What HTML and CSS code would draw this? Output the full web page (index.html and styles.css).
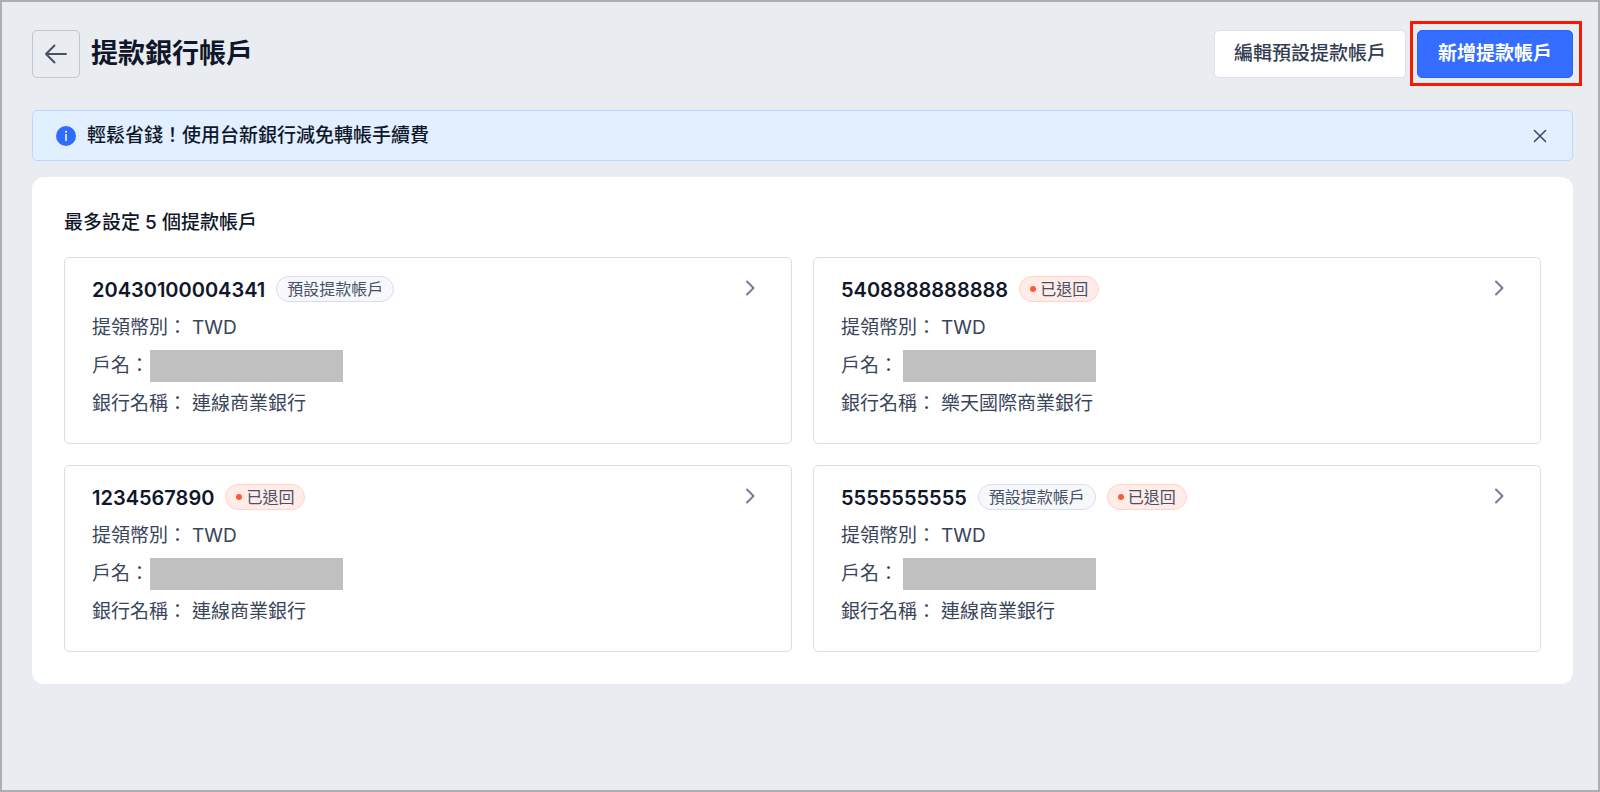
FILE: index.html
```html
<!DOCTYPE html>
<html lang="zh-Hant">
<head>
<meta charset="utf-8">
<meta name="viewport" content="width=device-width, initial-scale=1">
<title>提款銀行帳戶</title>
<link rel="stylesheet" href="styles.css">
</head>
<body>
<div class="page">
  <header class="page-header">
    <button class="back-button" type="button" aria-label="返回">
      <svg width="24" height="24" viewBox="0 0 24 24" fill="none" stroke="currentColor" stroke-width="2" stroke-linecap="round" stroke-linejoin="round" aria-hidden="true"><path d="M22 12H2M10.500 3.500L2 12l8.500 8.500"/></svg>
    </button>
    <h1 class="page-title">提款銀行帳戶</h1>
    <div class="actions">
      <button class="button" type="button">編輯預設提款帳戶</button>
      <div class="highlight">
        <button class="button button-primary" type="button">新增提款帳戶</button>
      </div>
    </div>
  </header>

  <main>
    <div class="banner" role="status">
      <svg class="banner-icon" width="20" height="20" viewBox="0 0 20 20" aria-hidden="true"><circle cx="10" cy="10" r="10" fill="#306bff"/><circle cx="10" cy="5.800" r="1" fill="#fff"/><path d="M10 8.500v6" stroke="#fff" stroke-width="1.500" stroke-linecap="round"/></svg>
      <p class="banner-text">輕鬆省錢！使用台新銀行減免轉帳手續費</p>
      <button class="banner-close" type="button" aria-label="關閉">
        <svg width="20" height="20" viewBox="0 0 20 20" fill="none" stroke="currentColor" stroke-width="1.500" stroke-linecap="round" aria-hidden="true"><path d="M4.500 4.500l11 11M15.500 4.500l-11 11"/></svg>
      </button>
    </div>

    <section class="panel">
      <h2 class="panel-title">最多設定 5 個提款帳戶</h2>
      <div class="accounts">
        <article class="account">
          <div class="account-head">
            <h3 class="account-number">20430100004341</h3>
            <span class="tag">預設提款帳戶</span>
            <button class="account-open" type="button" aria-label="查看帳戶"><svg width="24" height="24" viewBox="0 0 24 24" fill="none" stroke="currentColor" stroke-width="2" stroke-linecap="round" stroke-linejoin="round" aria-hidden="true"><path d="M9 4.500l6.500 6.500L9 17.500"/></svg></button>
          </div>
          <dl class="details">
            <div class="row"><dt>提領幣別：</dt><dd>TWD</dd></div>
            <div class="row row-masked"><dt>戶名：</dt><dd class="mask"></dd></div>
            <div class="row"><dt>銀行名稱：</dt><dd>連線商業銀行</dd></div>
          </dl>
        </article>
        <article class="account">
          <div class="account-head">
            <h3 class="account-number">5408888888888</h3>
            <span class="tag tag-returned">已退回</span>
            <button class="account-open" type="button" aria-label="查看帳戶"><svg width="24" height="24" viewBox="0 0 24 24" fill="none" stroke="currentColor" stroke-width="2" stroke-linecap="round" stroke-linejoin="round" aria-hidden="true"><path d="M9 4.500l6.500 6.500L9 17.500"/></svg></button>
          </div>
          <dl class="details">
            <div class="row"><dt>提領幣別：</dt><dd>TWD</dd></div>
            <div class="row row-masked"><dt>戶名：</dt><dd class="mask"></dd></div>
            <div class="row"><dt>銀行名稱：</dt><dd>樂天國際商業銀行</dd></div>
          </dl>
        </article>
        <article class="account">
          <div class="account-head">
            <h3 class="account-number">1234567890</h3>
            <span class="tag tag-returned">已退回</span>
            <button class="account-open" type="button" aria-label="查看帳戶"><svg width="24" height="24" viewBox="0 0 24 24" fill="none" stroke="currentColor" stroke-width="2" stroke-linecap="round" stroke-linejoin="round" aria-hidden="true"><path d="M9 4.500l6.500 6.500L9 17.500"/></svg></button>
          </div>
          <dl class="details">
            <div class="row"><dt>提領幣別：</dt><dd>TWD</dd></div>
            <div class="row row-masked"><dt>戶名：</dt><dd class="mask"></dd></div>
            <div class="row"><dt>銀行名稱：</dt><dd>連線商業銀行</dd></div>
          </dl>
        </article>
        <article class="account">
          <div class="account-head">
            <h3 class="account-number">5555555555</h3>
            <span class="tag">預設提款帳戶</span>
            <span class="tag tag-returned">已退回</span>
            <button class="account-open" type="button" aria-label="查看帳戶"><svg width="24" height="24" viewBox="0 0 24 24" fill="none" stroke="currentColor" stroke-width="2" stroke-linecap="round" stroke-linejoin="round" aria-hidden="true"><path d="M9 4.500l6.500 6.500L9 17.500"/></svg></button>
          </div>
          <dl class="details">
            <div class="row"><dt>提領幣別：</dt><dd>TWD</dd></div>
            <div class="row row-masked"><dt>戶名：</dt><dd class="mask"></dd></div>
            <div class="row"><dt>銀行名稱：</dt><dd>連線商業銀行</dd></div>
          </dl>
        </article>
      </div>
    </section>
  </main>
</div>
</body>
</html>
```
FILE: styles.css
```css
* {
  box-sizing: border-box;
  margin: 0;
  padding: 0;
}

body {
  font-family: Inter, "Noto Sans CJK TC", sans-serif;
  font-size: 19px;
  line-height: 28px;
  color: #10172a;
  background: #e9edf2;
}

button {
  font: inherit;
  color: inherit;
  background: none;
  border: 0;
  cursor: pointer;
}

svg {
  display: block;
}

.page {
  min-height: 100vh;
  padding: 28px 25px 32px 30px;
  border: 2px solid #abaeb3;
}

.page-header {
  display: flex;
  align-items: center;
  gap: 11px;
  margin-bottom: 32px;
}

.back-button {
  display: grid;
  place-items: center;
  width: 48px;
  height: 48px;
  color: #475066;
  border: 1px solid #bfc4d6;
  border-radius: 5px;
}

.page-title {
  font-size: 27px;
  line-height: 40px;
  font-weight: 700;
}

.actions {
  display: flex;
  gap: 11px;
  margin-left: auto;
}

.button {
  height: 48px;
  padding: 0 19px;
  font-weight: 500;
  color: #333d52;
  background: #fff;
  border: 1px solid #dde1ec;
  border-radius: 5px;
  white-space: nowrap;
}

.button-primary {
  padding: 0 20px;
  color: #fff;
  font-weight: 700;
  background: #346dff;
  border-color: #2463ff;
}

.highlight {
  position: relative;
}

.highlight::after {
  content: "";
  position: absolute;
  inset: -9px -9px -8px -7px;
  border: 3px solid #fc1703;
  pointer-events: none;
}

.banner {
  display: flex;
  align-items: center;
  gap: 11px;
  margin-bottom: 16px;
  padding: 11px 22px 10px 23px;
  background: #e1efff;
  border: 1px solid #bdd5ff;
  border-radius: 5px;
}

.banner-icon {
  flex: none;
}

.banner-text {
  flex: 1;
  font-weight: 500;
}

.banner-close {
  color: #3d475c;
}

.panel {
  padding: 32px;
  background: #fff;
  border-radius: 12px;
}

.panel-title {
  margin-bottom: 20px;
  font-size: 19px;
  font-weight: 500;
}

.accounts {
  display: grid;
  grid-template-columns: 1fr 1fr;
  gap: 21px;
}

.account {
  padding: 12px 29px 20px 27px;
  border: 1px solid #d9deeb;
  border-radius: 5px;
}

.account-head {
  display: flex;
  align-items: center;
  gap: 11px;
  height: 38px;
}

.account-number {
  padding-top: 1px;
  font-size: 20px;
  font-weight: 600;
}

.tag {
  display: flex;
  align-items: center;
  gap: 4px;
  padding: 0 10px;
  font-size: 16px;
  line-height: 24px;
  color: #475066;
  background: #f6f8fc;
  border: 1px solid #d9deec;
  border-radius: 13px;
}

.tag-returned {
  background: #ffebe7;
  border-color: #ffd3ca;
}

.tag-returned::before {
  content: "";
  width: 6px;
  height: 6px;
  background: #ff5a36;
  border-radius: 50%;
}

.account-open {
  margin-left: auto;
  color: #727d95;
}

.details {
  padding-top: 1px;
}

.row {
  display: flex;
  align-items: center;
  gap: 5px;
  height: 38px;
  color: #3a445a;
}

.row-masked {
  gap: 1px;
}

.mask {
  width: 193px;
  height: 32px;
  background: #c0c0c0;
}

.account:nth-child(even) .row-masked {
  gap: 5px;
}
```
